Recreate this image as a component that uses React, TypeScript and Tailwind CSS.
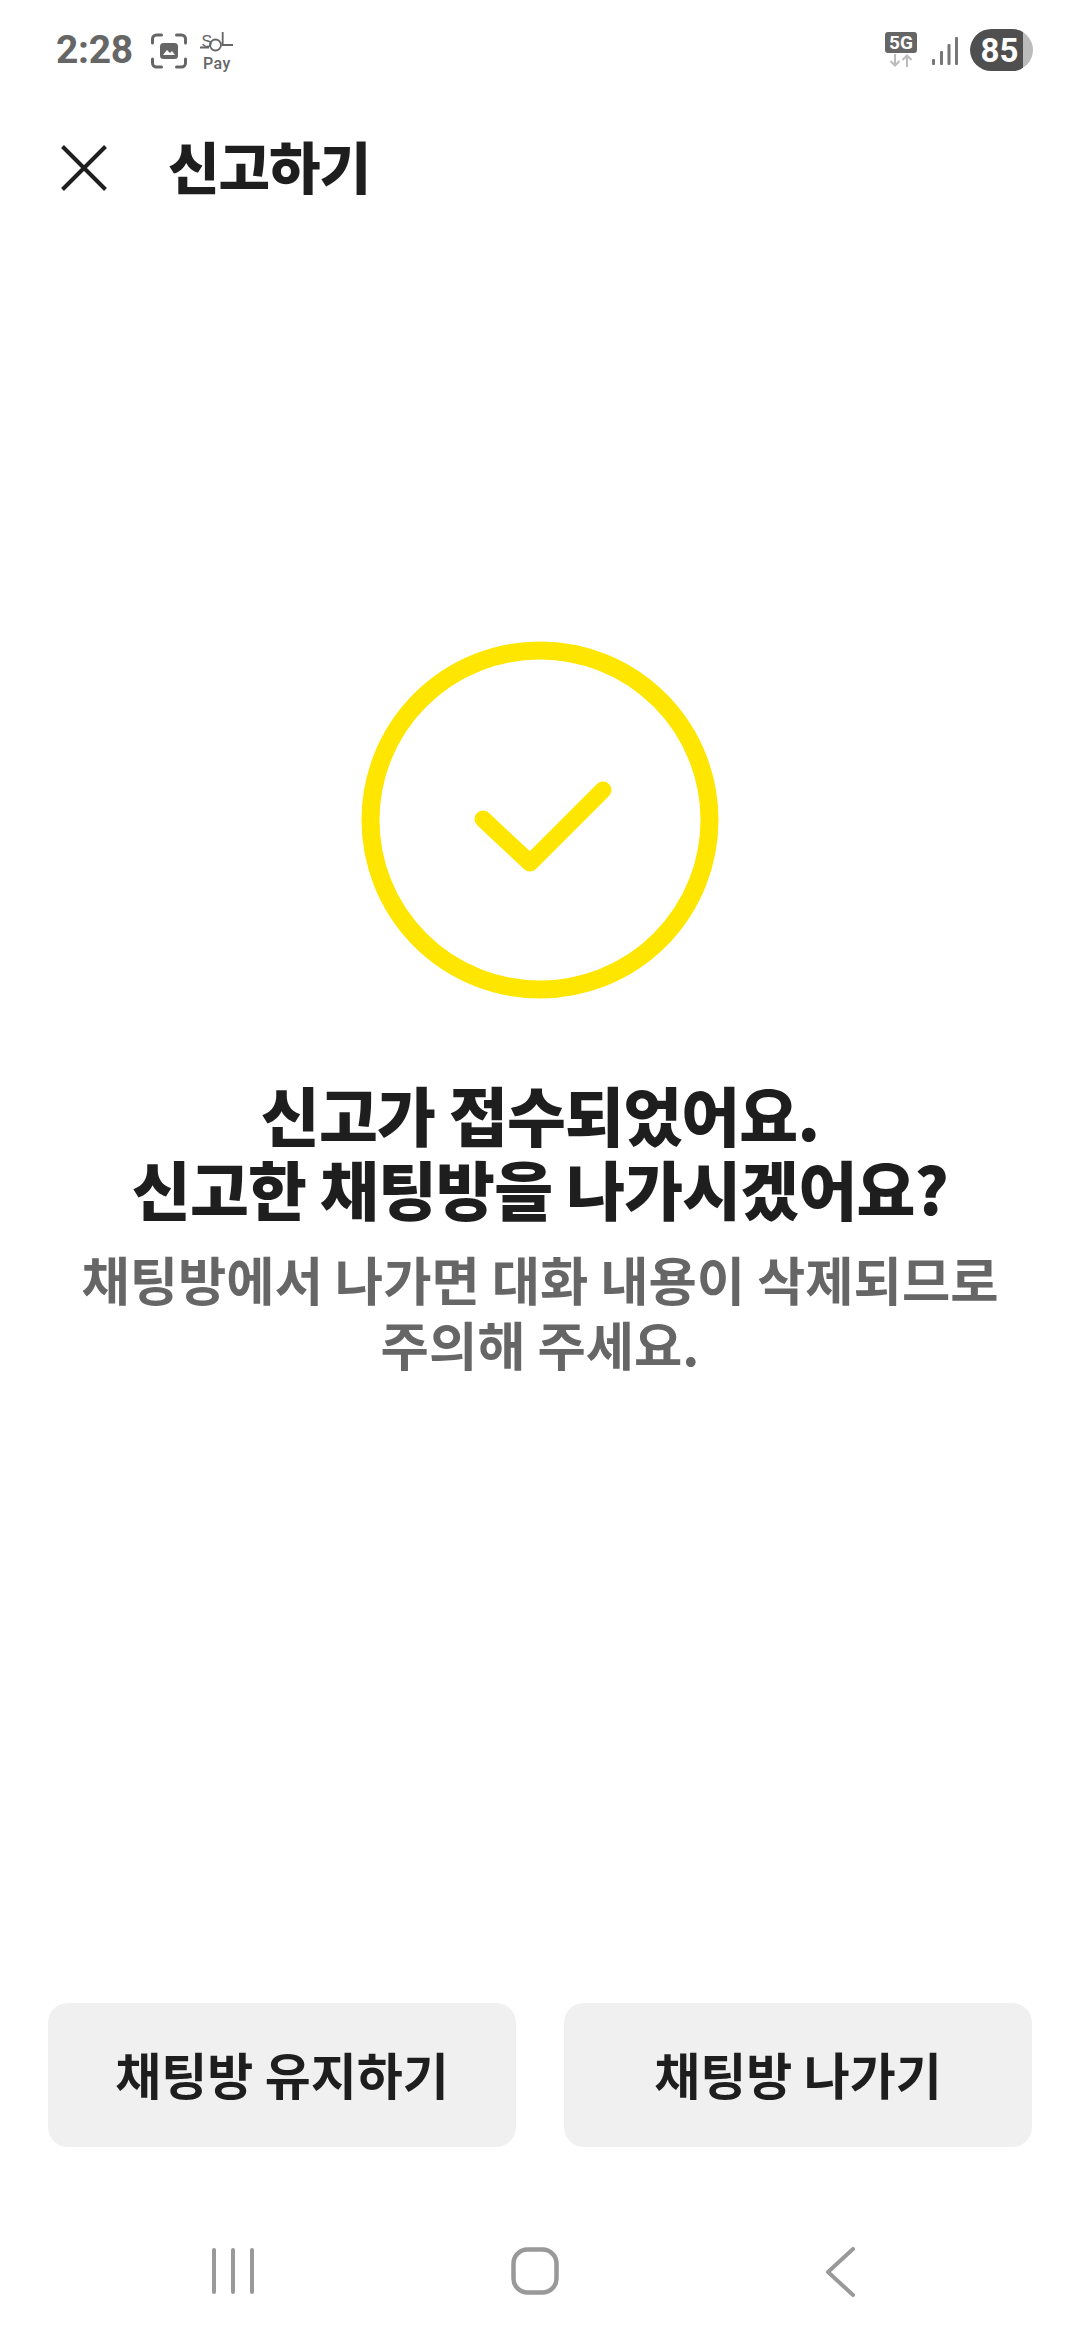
import React from 'react';

const KR = "font-['Noto_Sans_CJK_KR','Noto_Sans',sans-serif]";

const StatusBar = () => (
  <div className="flex h-[100px] items-center justify-between pl-[56px] pr-[47px]">
    <div className="flex items-center">
      <span className="font-['Roboto',sans-serif] text-[39px] font-bold leading-none tracking-[-0.3px] text-[#666666]">2:28</span>
      {/* screenshot indicator */}
      <svg className="ml-[18px] mt-[2px]" width="36" height="36" viewBox="0 0 36 36" fill="none">
        <path d="M1.500 10V6a4 4 0 0 1 4-4h5M25.500 2h5a4 4 0 0 1 4 4v4M34.500 26v4a4 4 0 0 1-4 4h-5M10.500 34h-5a4 4 0 0 1-4-4v-4" stroke="#666666" strokeWidth="3" strokeLinecap="round" />
        <rect x="9" y="10" width="18" height="16" rx="3.500" fill="#666666" />
        <path d="M12 22l4-5 3 3 2-2 3 4z" fill="#ffffff" />
      </svg>
      {/* SOL Pay mark */}
      <div className="ml-[13px] mt-[2px] flex w-[34px] flex-col items-center">
        <svg width="34" height="24" viewBox="0 0 34 24" fill="none">
          <text x="1.500" y="15" fontFamily="Liberation Sans" fontSize="16" fill="#666666">S</text>
          <circle cx="15.500" cy="13" r="5.500" stroke="#666666" strokeWidth="1.800" />
          <path d="M22.700 0v13H33M0 15.500h9" stroke="#666666" strokeWidth="1.800" />
        </svg>
        <span className="font-['Roboto',sans-serif] text-[16px] font-medium leading-[15px] tracking-[0.5px] text-[#666666]">Pay</span>
      </div>
    </div>
    <div className="flex items-center">
      <div className="flex flex-col items-center">
        <div className="flex h-[21px] w-[32px] items-center justify-center rounded-[3px] bg-[#666666] font-['Roboto',sans-serif] text-[19px] font-bold leading-none text-white">5G</div>
        <svg width="26" height="15" viewBox="0 0 26 15" fill="none">
          <path d="M7 1v11M2.500 8l4.500 4.500L11.500 8" stroke="#bbbbbb" strokeWidth="2" />
          <path d="M19 14V2.500M14.500 7L19 2.500 23.500 7" stroke="#bbbbbb" strokeWidth="2" />
        </svg>
      </div>
      {/* signal bars */}
      <svg className="ml-[15px] mt-[2px]" width="26" height="28" viewBox="0 0 26 28" fill="#777777">
        <rect x="0" y="22" width="3" height="6" rx="1" />
        <rect x="8" y="14" width="3" height="14" rx="1" />
        <rect x="15.500" y="7" width="3" height="21" rx="1" />
        <rect x="23" y="0" width="3" height="28" rx="1" />
      </svg>
      <div className="ml-[12px] flex h-[42px] w-[63px] items-center overflow-hidden rounded-full bg-[#bbbbbb]">
        <div className="flex h-full w-[53px] items-center justify-center rounded-l-full bg-[#4f4f4f] pl-[6px] font-['Roboto',sans-serif] text-[33px] font-bold leading-none text-white">85</div>
      </div>
    </div>
  </div>
);

const Header = () => (
  <div className="mt-[28px] flex h-[80px] items-center pl-[61px]">
    <svg width="46" height="46" viewBox="0 0 46 46" fill="none">
      <path d="M1.500 1.500l43 43M44.500 1.500l-43 43" stroke="#1e1e1e" strokeWidth="4" />
    </svg>
    <h1 className={`mb-[6px] ml-[61px] text-[56px] font-black leading-none tracking-[-1px] text-[#1e1e1e] ${KR}`}>신고하기</h1>
  </div>
);

const CheckCircle = () => (
  <svg width="358" height="358" viewBox="0 0 358 358" fill="none">
    <circle cx="179" cy="179" r="169.500" stroke="#ffe600" strokeWidth="18" />
    <path d="M122 178l47 44 73-73" stroke="#ffe600" strokeWidth="17" strokeLinecap="round" strokeLinejoin="round" />
  </svg>
);

const NavBar = () => (
  <div className="flex h-[193px] items-start pl-[212px] pt-[100px]">
    <svg width="42" height="48" viewBox="0 0 42 48" fill="#999999">
      <rect x="0" y="1" width="4" height="46" rx="2" />
      <rect x="19" y="1" width="4" height="46" rx="2" />
      <rect x="38" y="1" width="4" height="46" rx="2" />
    </svg>
    <svg className="ml-[257px]" width="48" height="48" viewBox="0 0 48 48" fill="none">
      <rect x="2.500" y="2.500" width="43" height="43" rx="14" stroke="#999999" strokeWidth="4.500" />
    </svg>
    <svg className="ml-[266px]" width="30" height="50" viewBox="0 0 30 50" fill="none">
      <path d="M28 2L3 25l25 23" stroke="#999999" strokeWidth="4" strokeLinecap="round" strokeLinejoin="round" />
    </svg>
  </div>
);

export default function App() {
  return (
    <div className={`flex h-[2340px] w-[1080px] flex-col bg-white ${KR}`}>
      <StatusBar />
      <Header />

      <main className="flex flex-1 flex-col items-center pt-[433px]">
        <CheckCircle />
        <h2 className="mt-[77px] text-center text-[64px] font-black leading-[74px] tracking-[-0.8px] text-[#1e1e1e]">
          신고가 접수되었어요.
          <br />
          신고한 채팅방을 나가시겠어요?
        </h2>
        <p className="mt-[22px] text-center text-[52.500px] font-bold leading-[65px] text-[#666666]">
          채팅방에서 나가면 대화 내용이 삭제되므로
          <br />
          주의해 주세요.
        </p>
      </main>

      <div className="flex gap-[48px] px-[48px]">
        <button className="flex h-[144px] flex-1 items-center justify-center rounded-[20px] bg-[#f0f0f0] pb-[4px] text-[50px] font-bold text-[#1e1e1e]">채팅방 유지하기</button>
        <button className="flex h-[144px] flex-1 items-center justify-center rounded-[20px] bg-[#f0f0f0] pb-[4px] text-[50px] font-bold text-[#1e1e1e]">채팅방 나가기</button>
      </div>
      <NavBar />
    </div>
  );
}
